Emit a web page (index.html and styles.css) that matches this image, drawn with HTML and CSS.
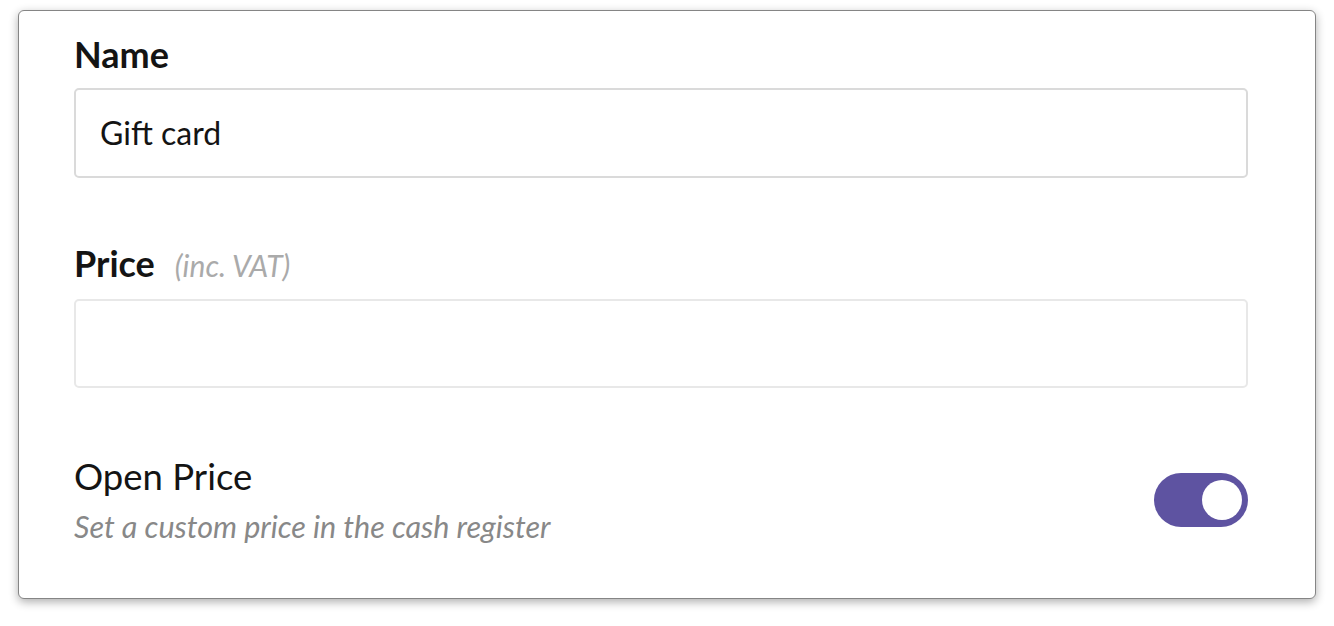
FILE: index.html
```html
<!DOCTYPE html>
<html lang="en">
<head>
<meta charset="utf-8">
<title>Gift card</title>
<link rel="stylesheet" href="styles.css">
</head>
<body>
<div class="page">
  <div class="card">
    <div class="field">
      <label class="label">Name</label>
      <div class="input"><span class="value">Gift card</span></div>
    </div>
    <div class="field field-gap">
      <label class="label">Price <span class="hint">(inc. VAT)</span></label>
      <div class="input input-light"></div>
    </div>
    <div class="toggle-row">
      <div class="toggle-text">
        <div class="toggle-title">Open Price</div>
        <div class="toggle-desc">Set a custom price in the cash register</div>
      </div>
      <div class="switch"><span class="knob"></span></div>
    </div>
  </div>
</div>
</body>
</html>
```

FILE: styles.css
```css
* { box-sizing: border-box; }
html, body { margin: 0; padding: 0; background: #fff; }
body {
  font-family: Lato, "Open Sans", "Liberation Sans", sans-serif;
  color: #141414;
}
.page {
  padding: 10px 18px 28px 18px;
}
.card {
  height: 589px;
  border: 1px solid #858585;
  border-radius: 6px;
  box-shadow: 0 3px 10px rgba(0, 0, 0, 0.32);
  background: #fff;
  padding: 22px 67px 0 55px;
}
.field {
  display: flex;
  flex-direction: column;
}
.field-gap { margin-top: 64px; }
.label {
  font-size: 36px;
  font-weight: 700;
  line-height: 42px;
  display: flex;
  align-items: baseline;
  gap: 20px;
}
.hint {
  font-weight: 400;
  font-style: italic;
  font-size: 30px;
  color: #aaaaaa;
}
.input {
  margin-top: 13px;
  height: 90px;
  border: 2px solid #dadada;
  border-radius: 5px;
  display: flex;
  align-items: center;
  padding-left: 24px;
}
.input-light { border-color: #e8e8e8; height: 89px; }
.value {
  font-size: 32px;
  line-height: 38px;
  color: #141414;
}
.toggle-row {
  margin-top: 67px;
  display: flex;
  align-items: center;
  justify-content: space-between;
}
.toggle-title {
  font-size: 36.5px;
  line-height: 42px;
}
.toggle-desc {
  margin-top: 11px;
  font-size: 30.5px;
  line-height: 36px;
  font-style: italic;
  color: #888888;
}
.switch {
  margin-top: 0;
  width: 94px;
  height: 54px;
  border-radius: 27px;
  background: #5e53a1;
  display: flex;
  align-items: center;
  justify-content: flex-end;
  padding-right: 6px;
}
.knob {
  width: 40px;
  height: 40px;
  border-radius: 50%;
  background: #fff;
}
```
